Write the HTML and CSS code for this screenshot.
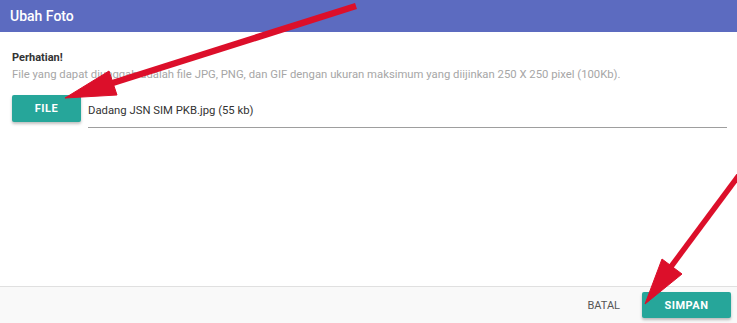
FILE: index.html
```html
<!DOCTYPE html>
<html lang="id">
<head>
    <meta charset="UTF-8">
    <meta name="viewport" content="width=device-width, initial-scale=1.0">
    <title>Ubah Foto</title>
    <link rel="stylesheet" href="styles.css">
</head>
<body>
    <div class="modal">
        <div class="modal-header">Ubah Foto</div>

        <div class="modal-body">
            <div class="note-title">Perhatian!</div>
            <div class="note-text">File yang dapat diunggah adalah file JPG, PNG, dan GIF dengan ukuran maksimum yang diijinkan 250 X 250 pixel (100Kb).</div>

            <div class="file-field">
                <button class="btn">FILE</button>
                <div class="file-path">Dadang JSN SIM PKB.jpg (55 kb)</div>
            </div>
        </div>

        <div class="modal-footer">
            <button class="btn-flat">BATAL</button>
            <button class="btn">SIMPAN</button>
        </div>
    </div>

    <!-- annotation arrows drawn over the dialog -->
    <svg class="arrows" width="737" height="323" viewBox="0 0 737 323">
        <g fill="#dc0f2a" stroke="#dc0f2a">
            <line x1="356" y1="6" x2="100" y2="87" stroke-width="6.5"/>
            <polygon points="65,98 109,71 117,95" stroke-width="1"/>
            <line x1="745" y1="167" x2="670" y2="268" stroke-width="5.5"/>
            <polygon points="645,304 662,259 682,274" stroke-width="1"/>
        </g>
    </svg>
</body>
</html>
```

FILE: styles.css
```css
body {
    margin: 0;
    font-family: 'Roboto', 'Liberation Sans', sans-serif;
    background: #fff;
    color: #333;
    position: relative;
    width: 737px;
    height: 323px;
    overflow: hidden;
}

.modal {
    display: flex;
    flex-direction: column;
    height: 323px;
}

.modal-header {
    background: #5c6bc0;
    color: #fff;
    height: 32px;
    line-height: 32px;
    padding: 0 10px;
    font-size: 14px;
    font-weight: 500;
}

.modal-body {
    flex: 1;
    padding: 18px 10px 0 12px;
}

.note-title {
    font-size: 11px;
    font-weight: 700;
    color: #333;
    line-height: 15px;
}

.note-text {
    font-size: 11.3px;
    color: #a6a6a6;
    line-height: 15px;
    margin-top: 2px;
}

.file-field {
    display: flex;
    align-items: flex-start;
    margin-top: 13px;
}

.btn {
    background: #26a69a;
    color: #fff;
    border: none;
    border-radius: 2px;
    font-family: inherit;
    font-size: 11px;
    font-weight: 700;
    letter-spacing: 0.5px;
    height: 27px;
    padding: 0 22px;
    box-shadow: 0 2px 3px rgba(0,0,0,0.25);
    cursor: pointer;
}

.file-field .btn {
    width: 69px;
    padding: 0;
}

.file-path {
    flex: 1;
    margin-left: 7px;
    font-size: 11.3px;
    color: #333;
    height: 32px;
    line-height: 31px;
    border-bottom: 1px solid #9e9e9e;
}

.modal-footer {
    height: 36px;
    background: #f9f9f9;
    border-top: 1px solid #e0e0e0;
    display: flex;
    align-items: center;
    justify-content: flex-end;
    padding: 0 6px 0 0;
    gap: 12px;
}

.modal-footer .btn {
    width: 89px;
    height: 26px;
    padding: 0;
}

.btn-flat {
    background: none;
    border: none;
    font-family: inherit;
    font-size: 11px;
    color: #555;
    padding: 0 10px;
    height: 26px;
    cursor: pointer;
}

.arrows {
    position: absolute;
    left: 0;
    top: 0;
    pointer-events: none;
}
```
